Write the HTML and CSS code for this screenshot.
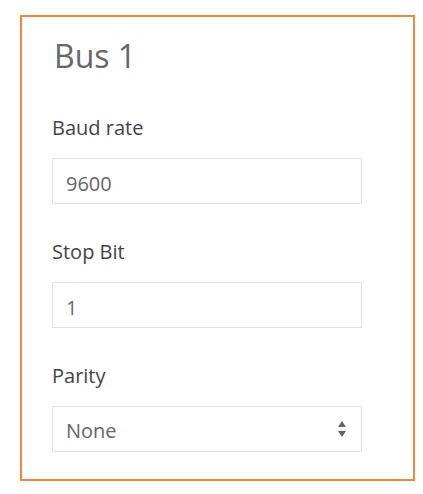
FILE: index.html
```html
<!DOCTYPE html>
<html lang="en">
  <head>
    <meta charset="UTF-8" />
    <meta name="viewport" content="width=device-width, initial-scale=1.0" />
    <title>Bus 1</title>
    <link rel="stylesheet" href="styles.css">
  </head>
  <body>
    <div class="bus-card">
      <h1 class="bus-title">Bus 1</h1>

      <div class="field">
        <label for="baud-rate">Baud rate</label>
        <input id="baud-rate" type="text" value="9600" />
      </div>

      <div class="field">
        <label for="stop-bit">Stop Bit</label>
        <input id="stop-bit" type="text" value="1" />
      </div>

      <div class="field">
        <label for="parity">Parity</label>
        <div class="select-wrap">
          <select id="parity">
            <option>None</option>
            <option>Even</option>
            <option>Odd</option>
          </select>
          <!-- up/down arrows -->
          <svg class="select-arrows" width="10" height="18" viewBox="0 0 10 18">
            <path d="M5 1 L9 7 L1 7 Z" fill="#666" />
            <path d="M1 11 L9 11 L5 17 Z" fill="#666" />
          </svg>
        </div>
      </div>
    </div>
  </body>
</html>
```

FILE: styles.css
```css
/* General Styles */
body {
  font-family: "Open Sans", "Noto Sans", sans-serif;
  margin: 0;
  padding: 15px 0 0 20px;
  background: #fff;
}

.bus-card {
  border: 2px solid #f4873d;
  padding: 20px 0 27px 30px;
  box-sizing: content-box;
  width: 361px;
}

.bus-title {
  font-size: 32px;
  font-weight: 400;
  line-height: 38px;
  color: #666;
  margin: 0 0 41px 2px;
}

.field {
  margin-bottom: 36px;
}

.field:last-child {
  margin-bottom: 0;
}

.field label {
  display: block;
  font-size: 20px;
  line-height: 24px;
  color: #444;
  margin-bottom: 18px;
}

.field input,
.field select {
  display: block;
  width: 310px;
  height: 46px;
  box-sizing: border-box;
  border: 1px solid #e3e3e3;
  border-radius: 0;
  padding: 13px 13px 8px;
  font-family: inherit;
  font-size: 20px;
  line-height: 24px;
  color: #666;
  background: #fff;
  outline: none;
}

.select-wrap {
  position: relative;
  width: 310px;
}

.field select {
  appearance: none;
  -webkit-appearance: none;
  padding: 11px 13px 8px;
}

.select-arrows {
  position: absolute;
  right: 15px;
  top: 14px;
  pointer-events: none;
}
```
